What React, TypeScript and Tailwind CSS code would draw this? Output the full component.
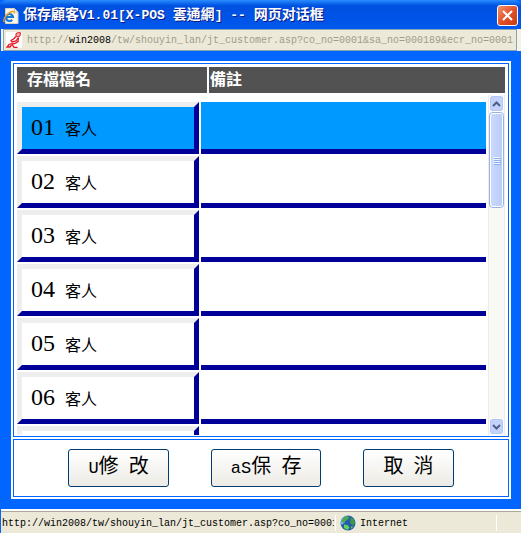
import React, { useState } from "react";
import { clsx } from "clsx";

interface Slot {
  no: string;
  name: string;
  note: string;
}

const host = "win2008";
const page = "/tw/shouyin_lan/jt_customer.asp?co_no=0001";
const query = "&sa_no=000189&ecr_no=0001";

const slots: Slot[] = [
  { no: "01", name: "客人", note: "" },
  { no: "02", name: "客人", note: "" },
  { no: "03", name: "客人", note: "" },
  { no: "04", name: "客人", note: "" },
  { no: "05", name: "客人", note: "" },
  { no: "06", name: "客人", note: "" },
  { no: "07", name: "客人", note: "" },
];

const actions = ["U修 改", "aS保 存", "取 消"];

const MixedText: React.FC<{ text: string; latin: string }> = ({
  text,
  latin,
}) => (
  <span className="whitespace-pre">
    {text.split(/([\x20-\x7e]+)/).map((part, i) =>
      i % 2 === 1 ? (
        <span key={i} className={latin}>
          {part}
        </span>
      ) : (
        part
      )
    )}
  </span>
);

const PageIcon = () => (
  <svg width="16" height="16" viewBox="0 0 16 16" className="shrink-0">
    <path d="M2.5 .5h9l3.500 3.500v11.500h-12.500z" fill="#f7f5ec" stroke="#d8d3bc" />
    <path d="M11.500 .5v3.500h3.500z" fill="#fff" stroke="#c9c4a8" />
    <path
      d="M3.200 9h6.800a3.500 3.500 0 1 0-.8 2.800"
      fill="none"
      stroke="#1478d4"
      strokeWidth="2.200"
    />
    <path
      d="M1.500 14C-1 12 4 4.500 9.500 3.500c2-.3 2 1 1.500 2"
      fill="none"
      stroke="#f0a422"
      strokeWidth="1.300"
    />
  </svg>
);

const SiteIcon = () => (
  <svg width="16" height="16" viewBox="0 0 16 16" className="shrink-0 bg-white">
    <g fill="none" stroke="#e8141c">
      <path d="M10 1.500l2-.8 2.500 0-.5 3.300-2 1-2-1z" fill="#f7b0b0" />
      <path d="M10 4.500L7.500 7 5 8.500l1 1.500 4-1 2-3" strokeWidth="1.300" />
      <path d="M12.500 5.500l-.5 4-3 2-3 .5 2 3.500h3.500" strokeWidth="1.300" />
      <path d="M6 11.500L3 12.500l-2 2.500h3l1.500-2" strokeWidth="1.300" />
    </g>
  </svg>
);

const GlobeIcon = () => (
  <svg width="16" height="16" viewBox="0 0 16 16" className="shrink-0">
    <circle cx="8" cy="8" r="7.500" fill="#245cae" />
    <path d="M1 7.500C1.500 3 5 1 7 1L6 5l-2 3-2.500 2z" fill="#7cc4e8" />
    <path d="M3 3l3-1.800L9.500 1.500 8 4.500 5 6 4 8 1.500 7z" fill="#4fa851" />
    <path d="M10.500 2.500l2.500 1 2 4-1.500 3-3.500-2.500.5-2z" fill="#3e9b48" />
    <path d="M4 9.500l3.500.5 2 2.500L7.500 15l-3.500-2z" fill="#62d452" />
    <path d="M11 11.500l2.500-.5L11 14z" fill="#62c452" />
  </svg>
);

const Chevron: React.FC<{ down?: boolean }> = ({ down }) => (
  <svg width="9" height="6" viewBox="0 0 9 6">
    <path
      d={down ? "M1 1l3.500 3.500L8 1" : "M1 5l3.500-3.500L8 5"}
      fill="none"
      stroke="#4d6185"
      strokeWidth="2"
    />
  </svg>
);

const ScrollBar = () => (
  <div className="mr-[2px] flex w-[17px] shrink-0 flex-col border-x border-[#eeede5] bg-[#f8f8f4]">
    <button
      aria-label="Scroll up"
      className="flex h-[17px] items-center justify-center rounded-sm border border-white bg-[#c3d3fd] outline outline-[#b4c8f6] -outline-offset-2"
    >
      <Chevron />
    </button>
    <div className="flex h-[96px] flex-col items-center justify-center gap-px rounded-sm border border-[#98b1e4] bg-linear-to-r from-[#cbdafe] to-[#b9cbf8] outline outline-white -outline-offset-2">
      {[0, 1, 2, 3].map((line) => (
        <span key={line} className="h-px w-[7px] bg-[#eef4fe] shadow-[1px_1px_#8cb0f8]" />
      ))}
    </div>
    <div className="flex-1" />
    <button
      aria-label="Scroll down"
      className="flex h-[17px] items-center justify-center rounded-sm border border-white bg-[#c3d3fd] outline outline-[#b4c8f6] -outline-offset-2"
    >
      <Chevron down />
    </button>
  </div>
);

const App: React.FC = () => {
  const [selected, setSelected] = useState<string>("01");

  return (
    <div className="flex h-screen flex-col overflow-hidden bg-[#0066ff] font-['Liberation_Mono','Noto_Sans_CJK_TC',monospace] text-black">
      <header className="flex h-[29px] shrink-0 items-center gap-1 rounded-t-md bg-linear-to-b from-[#2a8bff] via-[#0050e0] via-20% to-[#0058ee] px-[3px] pt-[2px] text-white">
        <PageIcon />
        <h1 className="flex-1 text-sm font-bold leading-5 [text-shadow:1px_1px_#0a1883]">
          <MixedText text="保存顧客V1.01[X-POS 雲通網] -- 网页对话框" latin="text-[13px]" />
        </h1>
        <button
          aria-label="Close"
          className="flex size-[21px] items-center justify-center rounded-[3px] border border-white bg-linear-to-br from-[#f0906c] via-[#e4512a] to-[#c83a10]"
        >
          <svg width="13" height="13" viewBox="0 0 13 13">
            <path d="M2 2l9 9M11 2l-9 9" stroke="#fff" strokeWidth="2" />
          </svg>
        </button>
      </header>

      <div className="ml-px flex h-[22px] shrink-0 bg-[#f6f3e6] pl-[2px] pr-[4px]">
        <div className="flex min-w-0 flex-1 items-center gap-[5px] overflow-hidden border border-[#8ba3b8] bg-[#ece9d8] pl-[2px] text-[10px] whitespace-nowrap text-[#a09c8c]">
          <SiteIcon />
          <span className="pt-px">
            http://<span className="text-black">{host}</span>
            {page}
            {query}
          </span>
        </div>
      </div>

      <main className="flex min-h-0 flex-1 flex-col py-[10px] pr-[10px] pl-[11px]">
        <div className="flex min-h-0 flex-1 flex-col gap-[2px] bg-white p-[2px]">
          <section className="flex min-h-0 flex-1 flex-col border border-[#0066ff] p-px">
            <table className="w-full table-fixed border-separate border-spacing-[2px] text-left text-base leading-6 text-white">
              <thead>
                <tr className="h-[26px] bg-[#525252]">
                  <th className="w-[190px] p-0 pt-[2px] pl-[10px]">存檔檔名</th>
                  <th className="p-0 pt-[2px] pl-px">備註</th>
                </tr>
              </thead>
            </table>
            <div className="flex min-h-0 flex-1">
              <div className="min-w-0 flex-1 overflow-y-auto pt-[5px] [scrollbar-width:none]">
                <table className="w-full table-fixed border-separate border-spacing-[2px]">
                  <tbody>
                    {slots.map((slot) => (
                      <tr
                        key={slot.no}
                        onClick={() => setSelected(slot.no)}
                        className={clsx(
                          "h-[52px]",
                          selected === slot.no ? "bg-[#0099ff]" : "bg-white"
                        )}
                      >
                        <td className="w-[182px] border-5 border-t-[#eeeeee] border-r-[#000099] border-b-[#000099] border-l-[#eeeeee] p-0 pt-[2px] pl-[9px] leading-6">
                          <span className="mr-[10px] font-['Liberation_Serif',serif] text-2xl leading-6">
                            {slot.no}
                          </span>
                          <span className="text-base leading-6">{slot.name}</span>
                        </td>
                        <td className="border-b-5 border-[#000099] p-0">{slot.note}</td>
                      </tr>
                    ))}
                  </tbody>
                </table>
              </div>
              <ScrollBar />
            </div>
          </section>

          <section className="flex shrink-0 justify-center gap-[42px] border border-[#0066ff] p-[9px]">
            {actions.map((label) => (
              <button
                key={label}
                className="h-[38px] rounded-[3px] border border-[#003c74] bg-linear-to-b from-white to-[#ecebe5] px-[19px] text-xl leading-6"
              >
                <MixedText text={label} latin="text-[17px]" />
              </button>
            ))}
          </section>
        </div>
      </main>

      <footer className="ml-px flex h-[24px] shrink-0 items-center border-t-2 border-white bg-[#ece9d8] pt-[2px] text-[10px] shadow-[inset_0_1px_#aca899]">
        <span className="w-[333px] overflow-hidden pl-px whitespace-nowrap">
          http://{host}
          {page}
        </span>
        <span className="mx-px h-4 w-px bg-white" />
        <span className="flex flex-1 items-center gap-1 pl-[3px]">
          <GlobeIcon />
          Internet
        </span>
        <span className="mr-6 h-4 w-px bg-white" />
      </footer>
    </div>
  );
};

export default App;
